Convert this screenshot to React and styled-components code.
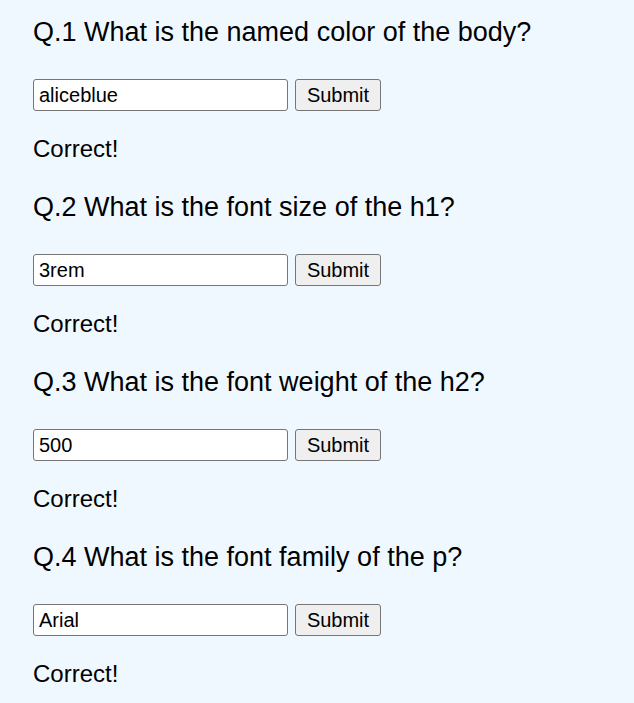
import styled, { createGlobalStyle } from 'styled-components'

const GlobalStyle = createGlobalStyle`
  body {
    margin: 0;
    background: aliceblue;
    font-family: "Liberation Sans", Arial, sans-serif;
    color: #000;
  }
`

const Page = styled.main`
  display: flex;
  flex-direction: column;
  gap: 29px;
  padding: 17px 0 0 33px;
`

const Question = styled.section`
  display: flex;
  flex-direction: column;
`

const Heading = styled.h2`
  margin: 0 0 31px;
  font-size: 27px;
  font-weight: 500;
  line-height: 31px;
`

const Form = styled.form`
  display: flex;
  gap: 7px;
  height: 32px;
`

const Answer = styled.input`
  box-sizing: border-box;
  width: 255px;
  height: 32px;
  padding: 0 5px;
  border: 1px solid #767676;
  border-radius: 3px;
  background: #fff;
  font-family: inherit;
  font-size: 20px;
  color: #000;
`

const SubmitButton = styled.button`
  box-sizing: border-box;
  width: 86px;
  height: 32px;
  padding: 0;
  border: 1px solid #767676;
  border-radius: 3px;
  background: #efefef;
  font-family: inherit;
  font-size: 20px;
  color: #000;
`

const Result = styled.p`
  margin: 24px 0 0;
  font-size: 24px;
  line-height: 28px;
`

const QUESTIONS = [
  { label: 'Q.1 What is the named color of the body?', answer: 'aliceblue' },
  { label: 'Q.2 What is the font size of the h1?', answer: '3rem' },
  { label: 'Q.3 What is the font weight of the h2?', answer: '500' },
  { label: 'Q.4 What is the font family of the p?', answer: 'Arial' },
]

const App = () => {
  return (
    <>
      <GlobalStyle />
      <Page>
        {QUESTIONS.map((q, index) => (
          <Question key={index}>
            <Heading>{q.label}</Heading>
            <Form onSubmit={e => e.preventDefault()}>
              <Answer type="text" defaultValue={q.answer} />
              <SubmitButton type="submit">Submit</SubmitButton>
            </Form>
            <Result>Correct!</Result>
          </Question>
        ))}
      </Page>
    </>
  )
}

export default App
